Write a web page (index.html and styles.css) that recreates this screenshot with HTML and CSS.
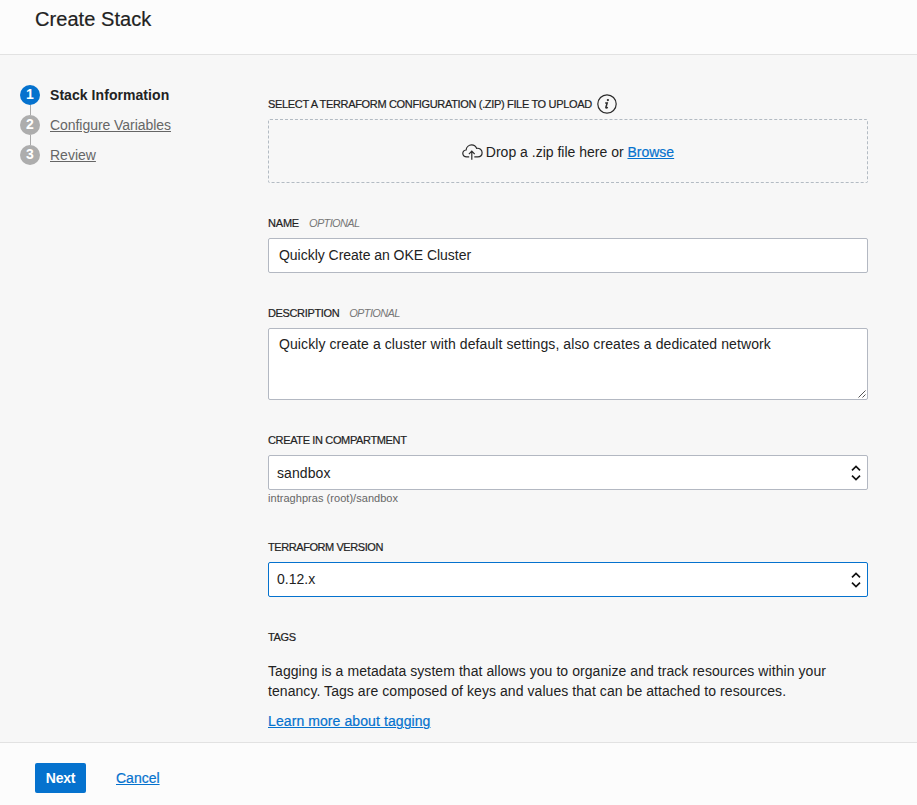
FILE: index.html
```html
<!DOCTYPE html>
<html lang="en">
<head>
<meta charset="utf-8">
<title>Create Stack</title>
<link rel="stylesheet" href="styles.css">
</head>
<body>
<header class="header"><h1 class="title">Create Stack</h1></header>
<div class="content">
  <nav class="steps">
    <div class="step active"><span class="num">1</span><span class="step-name">Stack Information</span></div>
    <div class="step"><span class="num">2</span><a class="step-name configure">Configure Variables</a></div>
    <div class="step"><span class="num">3</span><a class="step-name review">Review</a></div>
  </nav>
  <main class="form">
    <section class="field">
      <div class="label upload-label"><span class="upload-text">SELECT A TERRAFORM CONFIGURATION (.ZIP) FILE TO UPLOAD</span>
        <svg class="info" width="20" height="20" viewBox="0 0 20 20" fill="none" stroke="#2b2b2b"><circle cx="10" cy="10" r="9.2" stroke-width="1.2"/><circle cx="10.9" cy="6.1" r="1.15" fill="#2b2b2b" stroke="none"/><path d="M8.200 8.900h2L8.900 13.200q-.3 1.400 2 .2" stroke-width="1.5"/></svg>
      </div>
      <div class="drop">
        <svg class="cloud" width="21" height="16" viewBox="0 0 21 16" fill="none" stroke="#2b2b2b" stroke-width="1.2"><path d="M7.2 12.9H4.7C2.4 12.9.8 11.5.8 9.5S2.3 6.2 4.1 6C4.4 3 6.8.9 9.6.9c2.300 0 4.200 1.300 5 3.400 3-.4 5.500 1.700 5.500 4.400 0 2.500-1.800 4.200-4.300 4.200h-3.500M9.800 15.800V7.200M6.900 10.100l2.900-2.900 2.900 2.900"/></svg>
        <span class="drop-text">Drop a .zip file here or <a class="link">Browse</a></span>
      </div>
    </section>
    <section class="field">
      <div class="label"><span class="name-label">NAME</span><em class="optional">OPTIONAL</em></div>
      <div class="box"><span class="name-value">Quickly Create an OKE Cluster</span></div>
    </section>
    <section class="field">
      <div class="label"><span class="desc-label">DESCRIPTION</span><em class="optional">OPTIONAL</em></div>
      <div class="box area"><span class="desc-value">Quickly create a cluster with default settings, also creates a dedicated network</span>
        <svg class="grip" width="8" height="8" viewBox="0 0 8 8" stroke="#555" stroke-width="1"><path d="M.5 7.500l7-7M4.500 7.500l3-3"/></svg>
      </div>
    </section>
    <section class="field">
      <div class="label"><span class="compartment-label">CREATE IN COMPARTMENT</span></div>
      <div class="box select"><span class="compartment-value">sandbox</span>
        <svg width="10" height="16" viewBox="0 0 10 16" fill="none" stroke="#111" stroke-width="1.7"><path d="M1 5.300l4-3.800 4 3.800M1 10.700l4 3.800 4-3.800"/></svg>
      </div>
      <div class="helper"><span class="helper-text">intraghpras (root)/sandbox</span></div>
    </section>
    <section class="field">
      <div class="label"><span class="version-label">TERRAFORM VERSION</span></div>
      <div class="box select focused"><span class="version-value">0.12.x</span>
        <svg width="10" height="16" viewBox="0 0 10 16" fill="none" stroke="#111" stroke-width="1.7"><path d="M1 5.300l4-3.800 4 3.800M1 10.700l4 3.800 4-3.800"/></svg>
      </div>
    </section>
    <section class="tags">
      <div class="label"><span class="tags-label">TAGS</span></div>
      <p class="para"><span class="para-one">Tagging is a metadata system that allows you to organize and track resources within your</span><br><span class="para-two">tenancy. Tags are composed of keys and values that can be attached to resources.</span></p>
      <a class="link learn">Learn more about tagging</a>
    </section>
  </main>
</div>
<footer class="footer"><button class="next">Next</button><a class="link cancel">Cancel</a></footer>
</body>
</html>
```

FILE: styles.css
```css
* { box-sizing: border-box; }
body {
  margin: 0;
  height: 805px;
  display: flex;
  flex-direction: column;
  overflow: hidden;
  background: #f7f7f7;
  color: #222;
  font: 14px/20px "Liberation Sans", Arial, sans-serif;
  white-space: nowrap;
}
.header {
  height: 55px;
  padding: 7px 35px 0;
  background: #fcfcfc;
  border-bottom: 1px solid #e2e2e2;
}
.title { margin: 0; font-size: 20px; line-height: 24px; font-weight: 400; letter-spacing: .06px; -webkit-text-stroke: .2px; }
.content { display: flex; height: 687px; }
.steps { width: 268px; padding: 30px 0 0 20px; display: flex; flex-direction: column; gap: 10px; }
.step { position: relative; display: flex; gap: 10px; height: 20px; color: #666; }
.step + .step::before {
  content: "";
  position: absolute;
  left: 10px;
  top: -10px;
  height: 10px;
  border-left: 1px solid #aaa;
}
.num {
  width: 20px;
  height: 20px;
  border-radius: 50%;
  background: #adadad;
  color: #fff;
  font-weight: 700;
  line-height: 19px;
  text-align: center;
}
.active { color: #222; font-weight: 700; }
.active .step-name { letter-spacing: .06px; }
.configure { letter-spacing: -.05px; }
.active .num { background: #0572ce; }
a { text-decoration: underline; text-underline-offset: 1px; text-decoration-thickness: 1px; }
.link { color: #0572ce; -webkit-text-stroke: .2px; }
.form { width: 600px; padding-top: 39px; }
.field { margin-bottom: 30px; }
.label {
  display: flex;
  align-items: center;
  height: 20px;
  margin-bottom: 5px;
  font-size: 11px;
  letter-spacing: -.36px;
  -webkit-text-stroke: .2px;
}
.upload-label { gap: 5px; }
.upload-text { letter-spacing: -.335px; }
.name-label { letter-spacing: -.2px; }
.version-label { letter-spacing: -.43px; }
.optional { margin-left: 10px; color: #777; letter-spacing: -.65px; -webkit-text-stroke: 0; }
.drop {
  height: 64px;
  padding-top: 2px;
  border: 1px dashed #b3bbc3;
  border-radius: 2px;
  display: flex;
  align-items: center;
  justify-content: center;
  gap: 3px;
}
.cloud { margin-top: -1px; }
.box {
  height: 35px;
  padding: 6px 10px;
  border: 1px solid #b3b8c2;
  border-radius: 2px;
  background: #fff;
}
.name-value { letter-spacing: -.03px; }
.desc-value { letter-spacing: .088px; }
.area { position: relative; height: 72px; padding-top: 5px; }
.grip { position: absolute; right: 1px; bottom: 1px; }
.select { display: flex; align-items: center; justify-content: space-between; padding: 0 6px 0 8px; }
.compartment-value { letter-spacing: .08px; }
.version-value { margin-top: -2px; }
.focused { border-color: #0572ce; }
.helper { height: 17px; line-height: 16px; font-size: 11px; letter-spacing: .04px; color: #666; }
.para { margin: 14px 0 10px; letter-spacing: .062px; }
.learn { display: inline-block; letter-spacing: .09px; }
.footer {
  flex: 1;
  display: flex;
  align-items: flex-start;
  gap: 30px;
  padding: 20px 35px 0;
  background: #fcfcfc;
  border-top: 1px solid #e2e2e2;
}
.next {
  width: 51px;
  height: 30px;
  padding: 0;
  border: 0;
  border-radius: 2px;
  background: #0572ce;
  color: #fff;
  font: 700 14px/30px "Liberation Sans", Arial, sans-serif;
  letter-spacing: -.25px;
}
.cancel { line-height: 30px; }
```
